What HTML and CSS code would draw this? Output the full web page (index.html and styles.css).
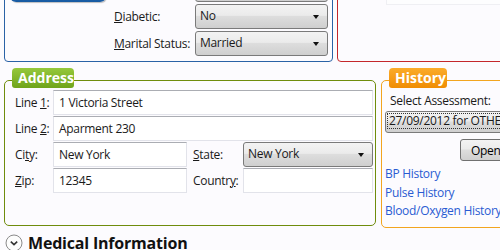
FILE: index.html
```html
<!DOCTYPE html>
<html lang="en">
<head>
<meta charset="UTF-8">
<meta name="viewport" content="width=device-width, initial-scale=1.0">
<title>Patient Details</title>
<link rel="stylesheet" href="styles.css">
</head>
<body>

<div class="page">
    <div class="top-row">
        <div class="patient-box">
            <div class="field-row">
                <div class="blue-tab"></div>
                <div></div>
                <div class="combo"><span></span><span class="arrow"></span></div>
            </div>
            <div class="field-row">
                <div></div>
                <span class="field-label"><u>D</u>iabetic:</span>
                <div class="combo"><span>No</span><span class="arrow"></span></div>
            </div>
            <div class="field-row">
                <div></div>
                <span class="field-label"><u>M</u>arital Status:</span>
                <div class="combo"><span>Married</span><span class="arrow"></span></div>
            </div>
        </div>
        <div class="alert-box">
            <div class="faint-input"></div>
        </div>
    </div>

    <div class="mid-row">
        <div class="group address">
            <div class="group-title">Address</div>
            <div class="address-grid">
                <span class="field-label">Line <u>1</u>:</span>
                <div class="text-input wide">1 Victoria Street</div>
                <span class="field-label">Line <u>2</u>:</span>
                <div class="text-input wide">Aparment 230</div>
                <span class="field-label">Ci<u>t</u>y:</span>
                <div class="text-input">New York</div>
                <span class="field-label pad"><u>S</u>tate:</span>
                <div class="combo"><span>New York</span><span class="arrow"></span></div>
                <span class="field-label"><u>Z</u>ip:</span>
                <div class="text-input">12345</div>
                <span class="field-label pad">Countr<u>y</u>:</span>
                <div class="text-input"></div>
            </div>
        </div>

        <div class="group history">
            <div class="group-title">History</div>
            <div class="history-body">
                <span class="field-label select-label">Select Assessment:</span>
                <div class="combo small"><span class="focus-text">27/09/2012 for OTHER</span></div>
                <div class="button-row">
                    <button class="open-button">Open</button>
                </div>
                <a class="history-link" href="#bp">BP History</a>
                <a class="history-link" href="#pulse">Pulse History</a>
                <a class="history-link" href="#oxygen">Blood/Oxygen History</a>
            </div>
        </div>
    </div>

    <div class="section-header">
        <svg class="expander" width="18" height="18" viewBox="0 0 18 18">
            <circle cx="9" cy="9" r="8" fill="#fdfdfd" stroke="#8a8a8a" stroke-width="1"/>
            <path d="M5.8 7.6 L9 10.6 L12.2 7.6" fill="none" stroke="#333" stroke-width="1.6"/>
        </svg>
        <span>Medical Information</span>
    </div>
</div>

</body>
</html>
```

FILE: styles.css
```css
body {
    margin: 0;
    background-color: #fcfbfe;
    font-family: "Open Sans", "Noto Sans", sans-serif;
    font-size: 12px;
    letter-spacing: -0.3px;
    color: #1a1a1a;
    overflow: hidden;
    height: 250px;
}

.page {
    padding-left: 4px;
    width: 560px;
}

.top-row {
    display: flex;
    gap: 4px;
    margin-top: -24px;
}

.patient-box {
    width: 323px;
    border: 1px solid #2a62a6;
    border-radius: 0 0 4px 4px;
    padding: 0 4px 3px 0;
    display: flex;
    flex-direction: column;
    gap: 2px;
    box-sizing: content-box;
}

.field-row {
    display: grid;
    grid-template-columns: 109px 81px 133px;
    align-items: center;
    height: 25px;
}

.blue-tab {
    height: 25px;
    margin-left: 5px;
    width: 96px;
    background: linear-gradient(#3b7cc4, #175aa2);
    border-radius: 0 0 6px 6px;
    box-shadow: 1px 1px 1px rgba(0, 0, 0, 0.25);
}

.alert-box {
    flex: 1;
    height: 84px;
    border: 1px solid #c4272b;
    border-radius: 0 0 4px 4px;
}

.faint-input {
    margin: 0 0 0 48px;
    height: 27px;
    border: 1px solid #efeff3;
    border-top: none;
    background: #fdfdfe;
}

.field-label {
    white-space: nowrap;
    line-height: 16px;
}

.combo {
    display: flex;
    align-items: center;
    justify-content: space-between;
    height: 25px;
    box-sizing: border-box;
    border: 1px solid #7a7a7a;
    border-radius: 3px;
    padding: 0 8px 2px 4px;
    background: linear-gradient(#f3f3f3 0%, #ebebeb 45%, #dddddd 50%, #cfcfcf 100%);
    white-space: nowrap;
    overflow: hidden;
}

.arrow {
    width: 0;
    height: 0;
    border-left: 3.5px solid transparent;
    border-right: 3.5px solid transparent;
    border-top: 4px solid #111;
    margin-top: 3px;
}

.mid-row {
    display: flex;
    align-items: flex-start;
    gap: 5px;
    margin-top: 18px;
}

.group {
    border: 1px solid;
    border-radius: 5px;
    box-sizing: border-box;
}

.group-title {
    height: 20px;
    line-height: 19px;
    margin: -13px 0 0 7px;
    padding: 0 6px;
    border-radius: 4px 4px 3px 3px;
    color: #fff;
    font-weight: bold;
    font-size: 14px;
    letter-spacing: 0;
}

.address {
    width: 372px;
    height: 146px;
    border-color: #6f8c0c;
}

.address .group-title {
    background: linear-gradient(#95c83c, #6fa41a);
    width: 50px;
}

.address-grid {
    display: grid;
    grid-template-columns: 38px 134px 56px 130px;
    grid-auto-rows: 25px;
    row-gap: 1px;
    align-items: center;
    margin-top: 2px;
    padding: 0 2px 0 10px;
}

.field-label.pad {
    padding-left: 6px;
}

.text-input {
    height: 25px;
    box-sizing: border-box;
    background: #fff;
    border: 1px solid #e2e3ea;
    border-top-color: #abadb3;
    padding: 3px 5px 0;
    line-height: 17px;
}

.text-input.wide {
    grid-column: span 3;
}

.history {
    width: 200px;
    height: 148px;
    border-color: #f2a51f;
}

.history .group-title {
    background: linear-gradient(#fbab2a, #f08d04);
    width: 46px;
}

.history-body {
    display: flex;
    flex-direction: column;
    padding-left: 3px;
}

.select-label {
    padding: 5px 0 0 5px;
    height: 17px;
}

.combo.small {
    height: 22px;
    margin-top: 1px;
    padding-left: 2px;
}

.focus-text {
    outline: 1px dotted #333;
    line-height: 14px;
    padding: 0 1px;
}

.button-row {
    padding: 6px 0 0 75px;
}

.open-button {
    height: 22px;
    width: 80px;
    border: 1px solid #707070;
    border-radius: 3px;
    background: linear-gradient(#f3f3f3 0%, #ebebeb 45%, #dddddd 50%, #cfcfcf 100%);
    font-family: inherit;
    font-size: 12px;
    letter-spacing: -0.3px;
    text-align: left;
    padding-left: 10px;
}

.history-link {
    color: #2a5bd2;
    text-decoration: none;
    line-height: 18.5px;
}

.button-row + .history-link {
    margin-top: 4px;
}

.section-header {
    display: flex;
    align-items: center;
    gap: 5px;
    margin-top: 5px;
    padding-left: 1px;
    font-weight: bold;
    font-size: 16px;
    letter-spacing: -0.2px;
    line-height: 20px;
    color: #111;
}
```
